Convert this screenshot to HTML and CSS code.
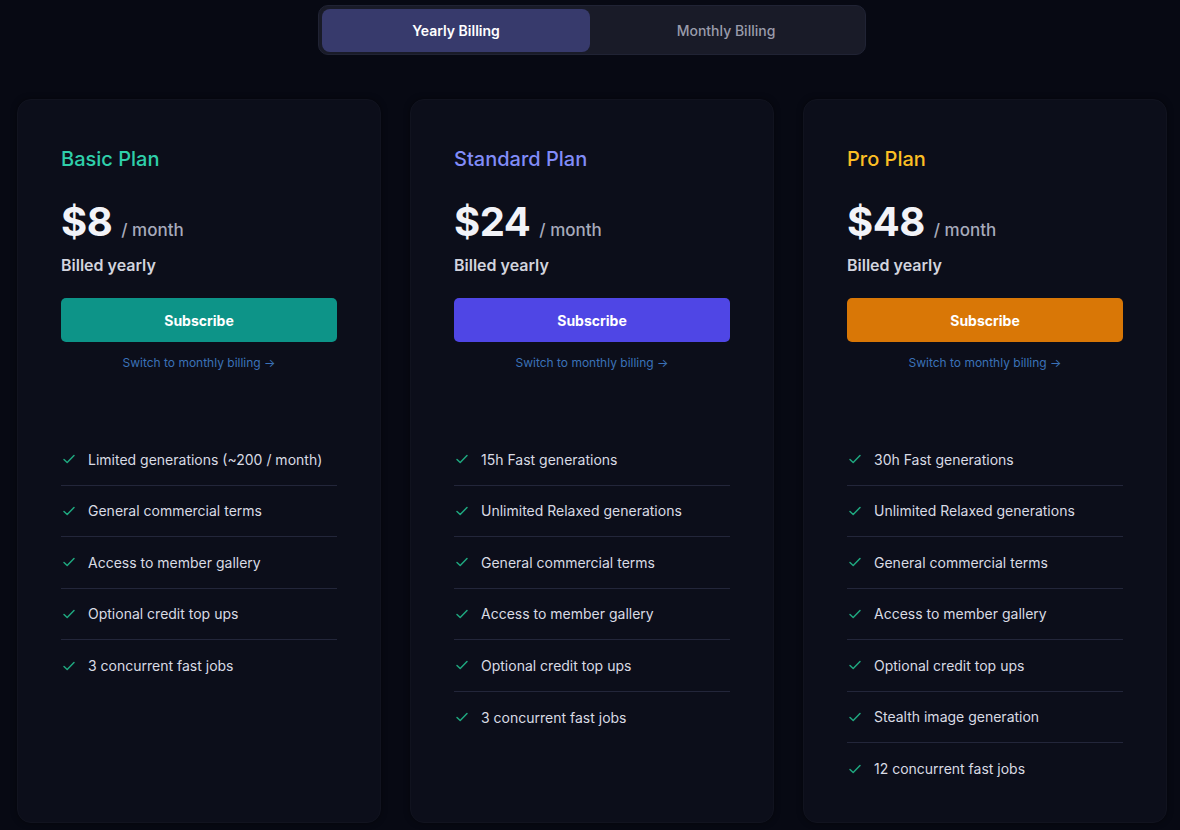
FILE: index.html
```html
<!DOCTYPE html>
<html>
<head>
<meta charset="utf-8">
<link rel="stylesheet" href="styles.css">
</head>
<body>
<div class="page">
  <div class="toggle">
    <button class="toggle-btn active">Yearly Billing</button>
    <button class="toggle-btn">Monthly Billing</button>
  </div>
  <div class="cards">
    <div class="card">
      <div class="top">
        <h2 class="plan basic">Basic Plan</h2>
        <div class="price"><span class="amount">$8</span><span class="per">/ month</span></div>
        <div class="billed">Billed yearly</div>
        <button class="sub sub-basic">Subscribe</button>
        <a class="switch">Switch to monthly billing →</a>
      </div>
      <ul class="features">
        <li><svg viewBox="0 0 16 16"><path d="M3 8.5l3.2 3L13 4.5"/></svg>Limited generations (~200 / month)</li>
        <li><svg viewBox="0 0 16 16"><path d="M3 8.5l3.2 3L13 4.5"/></svg>General commercial terms</li>
        <li><svg viewBox="0 0 16 16"><path d="M3 8.5l3.2 3L13 4.5"/></svg>Access to member gallery</li>
        <li><svg viewBox="0 0 16 16"><path d="M3 8.5l3.2 3L13 4.5"/></svg>Optional credit top ups</li>
        <li><svg viewBox="0 0 16 16"><path d="M3 8.5l3.2 3L13 4.5"/></svg>3 concurrent fast jobs</li>
      </ul>
    </div>
    <div class="card">
      <div class="top">
        <h2 class="plan standard">Standard Plan</h2>
        <div class="price"><span class="amount">$24</span><span class="per">/ month</span></div>
        <div class="billed">Billed yearly</div>
        <button class="sub sub-standard">Subscribe</button>
        <a class="switch">Switch to monthly billing →</a>
      </div>
      <ul class="features">
        <li><svg viewBox="0 0 16 16"><path d="M3 8.5l3.2 3L13 4.5"/></svg>15h Fast generations</li>
        <li><svg viewBox="0 0 16 16"><path d="M3 8.5l3.2 3L13 4.5"/></svg>Unlimited Relaxed generations</li>
        <li><svg viewBox="0 0 16 16"><path d="M3 8.5l3.2 3L13 4.5"/></svg>General commercial terms</li>
        <li><svg viewBox="0 0 16 16"><path d="M3 8.5l3.2 3L13 4.5"/></svg>Access to member gallery</li>
        <li><svg viewBox="0 0 16 16"><path d="M3 8.5l3.2 3L13 4.5"/></svg>Optional credit top ups</li>
        <li><svg viewBox="0 0 16 16"><path d="M3 8.5l3.2 3L13 4.5"/></svg>3 concurrent fast jobs</li>
      </ul>
    </div>
    <div class="card">
      <div class="top">
        <h2 class="plan pro">Pro Plan</h2>
        <div class="price"><span class="amount">$48</span><span class="per">/ month</span></div>
        <div class="billed">Billed yearly</div>
        <button class="sub sub-pro">Subscribe</button>
        <a class="switch">Switch to monthly billing →</a>
      </div>
      <ul class="features">
        <li><svg viewBox="0 0 16 16"><path d="M3 8.5l3.2 3L13 4.5"/></svg>30h Fast generations</li>
        <li><svg viewBox="0 0 16 16"><path d="M3 8.5l3.2 3L13 4.5"/></svg>Unlimited Relaxed generations</li>
        <li><svg viewBox="0 0 16 16"><path d="M3 8.5l3.2 3L13 4.5"/></svg>General commercial terms</li>
        <li><svg viewBox="0 0 16 16"><path d="M3 8.5l3.2 3L13 4.5"/></svg>Access to member gallery</li>
        <li><svg viewBox="0 0 16 16"><path d="M3 8.5l3.2 3L13 4.5"/></svg>Optional credit top ups</li>
        <li><svg viewBox="0 0 16 16"><path d="M3 8.5l3.2 3L13 4.5"/></svg>Stealth image generation</li>
        <li><svg viewBox="0 0 16 16"><path d="M3 8.5l3.2 3L13 4.5"/></svg>12 concurrent fast jobs</li>
      </ul>
    </div>
  </div>
</div>
</body>
</html>
```

FILE: styles.css
```css
* { box-sizing: border-box; }
html, body {
  margin: 0;
  padding: 0;
  background: #070913;
  font-family: Inter, "Noto Sans", sans-serif;
  color: #e4e6ee;
}
.page {
  width: 1180px;
  height: 830px;
  overflow: hidden;
  padding-top: 5px;
}
.toggle {
  width: 548px;
  height: 50px;
  margin: 0 0 0 318px;
  display: flex;
  padding: 3px;
  background: #191b28;
  border: 1px solid #202334;
  border-radius: 10px;
}
.toggle-btn {
  flex: 0 0 268px;
  height: 43px;
  border: none;
  border-radius: 8px;
  background: transparent;
  font-family: inherit;
  font-size: 14px;
  font-weight: 500;
  color: #9a9cab;
}
.toggle-btn.active {
  background: #373a6c;
  color: #ffffff;
  font-weight: 600;
}
.toggle-btn:last-child { flex: 1; }
.cards {
  display: flex;
  gap: 29px;
  margin: 44px 0 0 17px;
}
.card {
  width: 364px;
  height: 724px;
  background: #0c0e1a;
  border: 1px solid #11131f;
  border-radius: 14px;
  padding: 45px 43px 0 43px;
  box-shadow: 0 0 6px rgba(0,0,0,0.4);
}
.top {
  display: flex;
  flex-direction: column;
}
.plan {
  margin: 0;
  font-size: 20px;
  font-weight: 500;
  line-height: 28px;
}
.basic { color: #2fcfaa; }
.standard { color: #818cf8; }
.pro { color: #fbbf24; }
.price {
  display: flex;
  align-items: baseline;
  margin-top: 26px;
  height: 46px;
}
.amount {
  font-size: 40px;
  font-weight: 700;
  color: #f2f3f8;
  letter-spacing: -0.5px;
  line-height: 46px;
}
.per {
  margin-left: 9px;
  font-size: 17px;
  font-weight: 500;
  color: #a7aabb;
}
.billed {
  margin-top: 9px;
  font-size: 16px;
  font-weight: 600;
  color: #d2d4de;
  line-height: 22px;
}
.sub {
  margin-top: 22px;
  height: 44px;
  width: 100%;
  border: none;
  border-radius: 5px;
  color: #ffffff;
  font-family: inherit;
  font-size: 14px;
  font-weight: 700;
}
.sub-basic { background: #0d9488; }
.sub-standard { background: #4f46e5; }
.sub-pro { background: #d97706; }
.switch {
  margin-top: 13px;
  text-align: center;
  font-size: 12px;
  color: #3b72b8;
  line-height: 16px;
}
.features {
  list-style: none;
  margin: 63px 0 0 0;
  padding: 0;
}
.features li {
  display: flex;
  align-items: center;
  height: 51.5px;
  border-bottom: 1px solid #23263a;
  font-size: 14px;
  color: #d9dbe4;
}
.features li:last-child { border-bottom: none; }
.features svg {
  width: 16px;
  height: 16px;
  margin: 0 11px 0 0;
  fill: none;
  stroke: #1fa77f;
  stroke-width: 1.5;
  stroke-linecap: round;
  stroke-linejoin: round;
}
```
